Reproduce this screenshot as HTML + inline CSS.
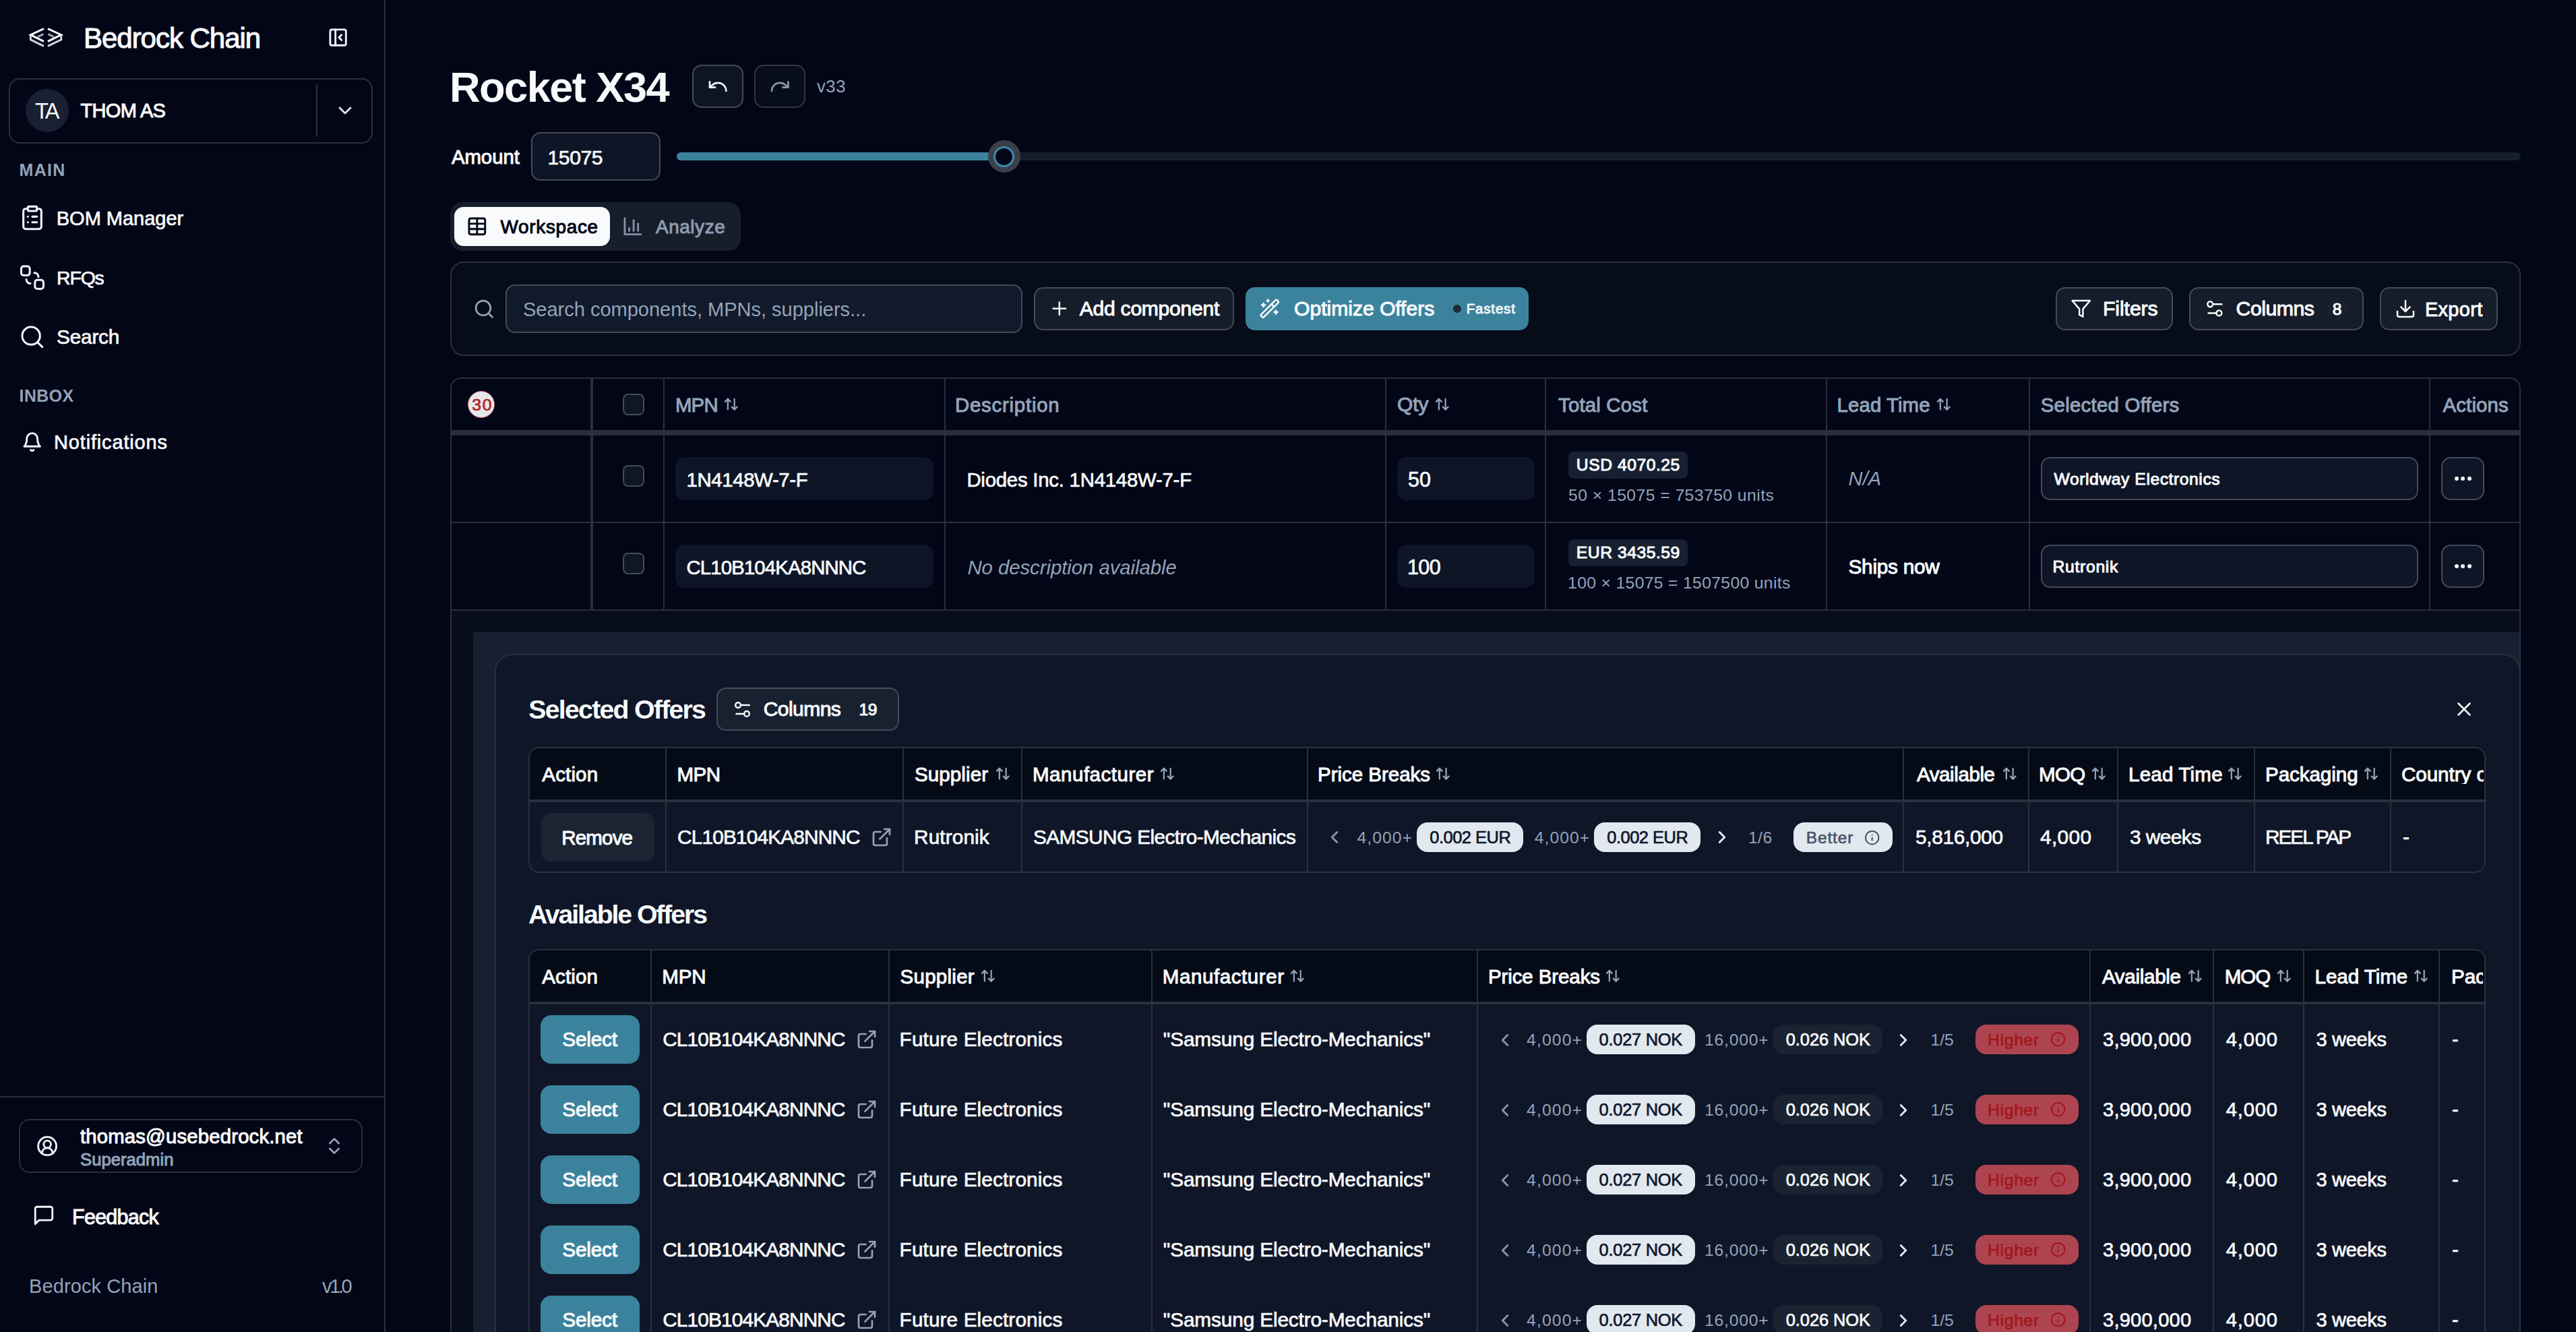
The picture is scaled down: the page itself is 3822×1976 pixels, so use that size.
<!DOCTYPE html>
<html><head><meta charset="utf-8"><style>
html,body{margin:0;padding:0;}
body{width:3822px;height:1976px;overflow:hidden;position:relative;background:#020617;font-family:"Liberation Sans",sans-serif;}
@media (max-width:2600px){body{zoom:0.5;}}
</style></head><body>
<div style="position:absolute;left:570px;top:0px;width:2px;height:1976px;background:#2a303c;border-radius:0px;"></div>
<svg style="position:absolute;left:0;top:0" width="100" height="100" viewBox="0 0 100 100" fill="none" stroke-width="3" stroke-linecap="butt" stroke-linejoin="miter">
<path d="M64.9 42.6 L45.4 51.7 L64.9 61.3" stroke="#f8fafc"/>
<path d="M71 42.6 L90.8 51.7 L71 61.3" stroke="#f8fafc"/>
<path d="M64.4 50.6 L56 54.6" stroke="#9aa3b2"/><path d="M71.5 50.6 L80 54.6" stroke="#9aa3b2"/>
<path d="M45.4 51.7 L45.4 58.8 L64.9 68.4" stroke="#cfd5de"/>
<path d="M90.8 51.7 L90.8 58.8 L71 68.4" stroke="#cfd5de"/>
</svg>
<div id="t0" style="position:absolute;left:124.00px;top:36.07px;font-size:42.15px;line-height:42.15px;font-weight:400;color:#f8fafc;white-space:nowrap;-webkit-text-stroke:1.0px #f8fafc;letter-spacing:-1.100px;">Bedrock Chain</div>
<svg style="position:absolute;left:486px;top:40.2px;" width="31.2" height="31.2" viewBox="0 0 24 24" fill="none" stroke="#f1f5f9" stroke-width="2.2" stroke-linecap="round" stroke-linejoin="round"><rect width="18" height="18" x="3" y="3" rx="2"/><path d="M9 3v18"/><path d="m16 15-3-3 3-3"/></svg>
<div style="position:absolute;left:13px;top:116px;width:540px;height:97px;background:transparent;border:2px solid #2a303c;box-sizing:border-box;border-radius:16px;"></div>
<div style="position:absolute;left:469px;top:125px;width:2px;height:78px;background:#2a303c;border-radius:0px;"></div>
<div style="position:absolute;left:38px;top:132px;width:64px;height:64px;border-radius:50%;background:#182031"></div>
<div id="t1" style="position:absolute;left:52.00px;top:148.53px;font-size:32.70px;line-height:32.70px;font-weight:400;color:#f8fafc;white-space:nowrap;letter-spacing:-2.700px;">TA</div>
<div id="t2" style="position:absolute;left:119.40px;top:150.09px;font-size:29.07px;line-height:29.07px;font-weight:400;color:#f8fafc;white-space:nowrap;-webkit-text-stroke:1.0px #f8fafc;letter-spacing:-0.700px;">THOM AS</div>
<svg style="position:absolute;left:496px;top:148px;" width="32" height="32" viewBox="0 0 24 24" fill="none" stroke="#e2e8f0" stroke-width="2" stroke-linecap="round" stroke-linejoin="round"><path d="m6 9 6 6 6-6"/></svg>
<div id="t3" style="position:absolute;left:28.60px;top:240.32px;font-size:25.00px;line-height:25.00px;font-weight:700;color:#94a3b8;white-space:nowrap;letter-spacing:1.267px;">MAIN</div>
<svg style="position:absolute;left:28px;top:303.4px;" width="40" height="40" viewBox="0 0 24 24" fill="none" stroke="#f1f5f9" stroke-width="1.85" stroke-linecap="round" stroke-linejoin="round"><rect width="8" height="4" x="8" y="2" rx="1" ry="1"/><path d="M16 4h2a2 2 0 0 1 2 2v14a2 2 0 0 1-2 2H6a2 2 0 0 1-2-2V6a2 2 0 0 1 2-2h2"/><path d="M12 11h4"/><path d="M12 16h4"/><path d="M8 11h.01"/><path d="M8 16h.01"/></svg>
<div id="t4" style="position:absolute;left:83.80px;top:310.09px;font-size:29.07px;line-height:29.07px;font-weight:400;color:#f8fafc;white-space:nowrap;-webkit-text-stroke:0.7px #f8fafc;letter-spacing:-0.060px;">BOM Manager</div>
<svg style="position:absolute;left:0;top:380px" width="80" height="60" viewBox="0 380 80 60" fill="none" stroke="#f1f5f9" stroke-width="3" stroke-linecap="round">
<rect x="31.5" y="395" width="12.7" height="13.4" rx="3.6"/>
<path d="M51 404.8 A6 6 0 0 1 57 410.8"/>
<path d="M39 414.6 A6 6 0 0 0 45 420.6"/>
<rect x="51.8" y="415.3" width="12.7" height="13.3" rx="3.6"/>
</svg>
<div id="t5" style="position:absolute;left:84.10px;top:398.38px;font-size:28.49px;line-height:28.49px;font-weight:400;color:#f8fafc;white-space:nowrap;-webkit-text-stroke:0.7px #f8fafc;letter-spacing:-1.200px;">RFQs</div>
<svg style="position:absolute;left:28.3px;top:479.8px;" width="39.6" height="39.6" viewBox="0 0 24 24" fill="none" stroke="#f1f5f9" stroke-width="1.85" stroke-linecap="round" stroke-linejoin="round"><circle cx="11" cy="11" r="8"/><path d="m21 21-4.3-4.3"/></svg>
<div id="t6" style="position:absolute;left:84.10px;top:485.48px;font-size:29.80px;line-height:29.80px;font-weight:400;color:#f8fafc;white-space:nowrap;-webkit-text-stroke:0.7px #f8fafc;letter-spacing:-0.240px;">Search</div>
<div id="t7" style="position:absolute;left:28.60px;top:576.35px;font-size:24.85px;line-height:24.85px;font-weight:700;color:#94a3b8;white-space:nowrap;letter-spacing:0.450px;">INBOX</div>
<svg style="position:absolute;left:32.4px;top:639.9px;" width="31.4" height="31.4" viewBox="0 0 24 24" fill="none" stroke="#f1f5f9" stroke-width="2.2" stroke-linecap="round" stroke-linejoin="round"><path d="M6 8a6 6 0 0 1 12 0c0 7 3 9 3 9H3s3-2 3-9"/><path d="M10.3 21a1.94 1.94 0 0 0 3.4 0"/></svg>
<div id="t8" style="position:absolute;left:80.00px;top:642.09px;font-size:29.07px;line-height:29.07px;font-weight:400;color:#f8fafc;white-space:nowrap;-webkit-text-stroke:0.7px #f8fafc;letter-spacing:0.817px;">Notifications</div>
<div style="position:absolute;left:0px;top:1626px;width:570px;height:2px;background:#2a303c;border-radius:0px;"></div>
<div style="position:absolute;left:28px;top:1660px;width:510px;height:80px;background:transparent;border:2px solid #2a303c;box-sizing:border-box;border-radius:16px;"></div>
<svg style="position:absolute;left:53.7px;top:1683.7px;" width="32.3" height="32.3" viewBox="0 0 24 24" fill="none" stroke="#f1f5f9" stroke-width="2.1" stroke-linecap="round" stroke-linejoin="round"><path d="M18 20a6 6 0 0 0-12 0"/><circle cx="12" cy="10" r="4"/><circle cx="12" cy="12" r="10"/></svg>
<div id="t9" style="position:absolute;left:119.00px;top:1670.55px;font-size:29.36px;line-height:29.36px;font-weight:400;color:#f8fafc;white-space:nowrap;-webkit-text-stroke:1.0px #f8fafc;letter-spacing:0.140px;">thomas@usebedrock.net</div>
<div id="t10" style="position:absolute;left:119.00px;top:1708.11px;font-size:25.73px;line-height:25.73px;font-weight:400;color:#94a3b8;white-space:nowrap;-webkit-text-stroke:1.0px #94a3b8;letter-spacing:-0.022px;">Superadmin</div>
<svg style="position:absolute;left:480px;top:1684px;" width="32" height="32" viewBox="0 0 24 24" fill="none" stroke="#94a3b8" stroke-width="2" stroke-linecap="round" stroke-linejoin="round"><path d="m7 15 5 5 5-5"/><path d="m7 9 5-5 5 5"/></svg>
<svg style="position:absolute;left:48px;top:1786px;" width="34" height="34" viewBox="0 0 24 24" fill="none" stroke="#f1f5f9" stroke-width="2" stroke-linecap="round" stroke-linejoin="round"><path d="M21 15a2 2 0 0 1-2 2H7l-4 4V5a2 2 0 0 1 2-2h14a2 2 0 0 1 2 2z"/></svg>
<div id="t11" style="position:absolute;left:107.00px;top:1789.87px;font-size:30.52px;line-height:30.52px;font-weight:400;color:#f8fafc;white-space:nowrap;-webkit-text-stroke:1.0px #f8fafc;letter-spacing:-0.743px;">Feedback</div>
<div id="t12" style="position:absolute;left:43.00px;top:1894.09px;font-size:29.07px;line-height:29.07px;font-weight:400;color:#94a3b8;white-space:nowrap;letter-spacing:0.067px;">Bedrock Chain</div>
<div id="t13" style="position:absolute;left:478.00px;top:1894.09px;font-size:29.07px;line-height:29.07px;font-weight:400;color:#94a3b8;white-space:nowrap;letter-spacing:-3.400px;">v1.0</div>
<div id="t14" style="position:absolute;left:667.00px;top:97.50px;font-size:63.23px;line-height:63.23px;font-weight:700;color:#f8fafc;white-space:nowrap;letter-spacing:-1.578px;">Rocket X34</div>
<div style="position:absolute;left:1027px;top:96px;width:76px;height:64px;background:#0d1424;border:2px solid #454a55;box-sizing:border-box;border-radius:14px;"></div>
<svg style="position:absolute;left:1048.7px;top:111.7px" width="32.4" height="32.4" viewBox="0 0 24 24" fill="none" stroke="#f1f5f9" stroke-width="2" stroke-linecap="round" stroke-linejoin="round"><path d="M3 7v6h6"/><path d="M21 17a9 9 0 0 0-9-9 9 9 0 0 0-6 2.3L3 13"/></svg>
<div style="position:absolute;left:1119px;top:96px;width:76px;height:64px;background:#080d1a;border:2px solid #30353f;box-sizing:border-box;border-radius:14px;"></div>
<svg style="position:absolute;left:1141px;top:111.7px" width="32.4" height="32.4" viewBox="0 0 24 24" fill="none" stroke="#8f96a3" stroke-width="2" stroke-linecap="round" stroke-linejoin="round"><path d="M21 7v6h-6"/><path d="M3 17a9 9 0 0 1 9-9 9 9 0 0 1 6 2.3l3 2.7"/></svg>
<div id="t15" style="position:absolute;left:1211.90px;top:115.91px;font-size:25.73px;line-height:25.73px;font-weight:400;color:#94a3b8;white-space:nowrap;letter-spacing:0.550px;">v33</div>
<div id="t16" style="position:absolute;left:669.90px;top:217.85px;font-size:29.36px;line-height:29.36px;font-weight:400;color:#f8fafc;white-space:nowrap;-webkit-text-stroke:1.0px #f8fafc;letter-spacing:-0.040px;">Amount</div>
<div style="position:absolute;left:788px;top:196px;width:192px;height:72px;background:#0e1526;border:2px solid #454a55;box-sizing:border-box;border-radius:14px;"></div>
<div id="t17" style="position:absolute;left:812.60px;top:218.54px;font-size:30.09px;line-height:30.09px;font-weight:400;color:#f8fafc;white-space:nowrap;-webkit-text-stroke:0.7px #f8fafc;letter-spacing:-0.450px;">15075</div>
<div style="position:absolute;left:1004px;top:226px;width:2736px;height:12px;background:#161e2d;border-radius:6px;"></div>
<div style="position:absolute;left:1004px;top:226px;width:480px;height:12px;background:#3b839d;border-radius:6px;"></div>
<div style="position:absolute;left:1465.5px;top:208px;width:48px;height:48px;border-radius:50%;background:#3b3f49"></div>
<div style="position:absolute;left:1474px;top:216.5px;width:31px;height:31px;border-radius:50%;background:#020617;border:3.5px solid #3e8aa8;box-sizing:border-box"></div>
<div style="position:absolute;left:668px;top:300px;width:431px;height:72px;background:#161e2c;border-radius:18px;"></div>
<div style="position:absolute;left:674px;top:307px;width:231px;height:58px;background:#f8fafc;border-radius:14px;"></div>
<svg style="position:absolute;left:692px;top:320px;" width="31.7" height="31.7" viewBox="0 0 24 24" fill="none" stroke="#020617" stroke-width="2.2" stroke-linecap="round" stroke-linejoin="round"><path d="M12 3v18"/><rect width="18" height="18" x="3" y="3" rx="2"/><path d="M3 9h18"/><path d="M3 15h18"/></svg>
<div id="t18" style="position:absolute;left:742.60px;top:323.27px;font-size:27.91px;line-height:27.91px;font-weight:400;color:#020617;white-space:nowrap;-webkit-text-stroke:1.0px #020617;letter-spacing:0.675px;">Workspace</div>
<svg style="position:absolute;left:922.9px;top:320.4px;" width="31.6" height="31.6" viewBox="0 0 24 24" fill="none" stroke="#8390a5" stroke-width="2.2" stroke-linecap="round" stroke-linejoin="round"><path d="M3 3v18h18"/><path d="M18 17V9"/><path d="M13 17V5"/><path d="M8 17v-3"/></svg>
<div id="t19" style="position:absolute;left:973.00px;top:323.27px;font-size:27.91px;line-height:27.91px;font-weight:400;color:#8d9bb0;white-space:nowrap;-webkit-text-stroke:1.0px #8d9bb0;letter-spacing:0.567px;">Analyze</div>
<div style="position:absolute;left:668px;top:388px;width:3072px;height:140px;background:#060c19;border:2px solid #2a303c;box-sizing:border-box;border-radius:20px;"></div>
<svg style="position:absolute;left:701.6px;top:441.6px;" width="32.6" height="32.6" viewBox="0 0 24 24" fill="none" stroke="#94a3b8" stroke-width="2" stroke-linecap="round" stroke-linejoin="round"><circle cx="11" cy="11" r="8"/><path d="m21 21-4.3-4.3"/></svg>
<div style="position:absolute;left:750px;top:422px;width:767px;height:72px;background:#111a2a;border:2px solid #454a55;box-sizing:border-box;border-radius:14px;"></div>
<div id="t20" style="position:absolute;left:776.00px;top:444.79px;font-size:29.07px;line-height:29.07px;font-weight:400;color:#94a3b8;white-space:nowrap;letter-spacing:-0.033px;">Search components, MPNs, suppliers...</div>
<div style="position:absolute;left:1534px;top:426px;width:297px;height:64px;background:#151c2a;border:2px solid #454a55;box-sizing:border-box;border-radius:14px;"></div>
<svg style="position:absolute;left:1556.3px;top:442px;" width="31.7" height="31.7" viewBox="0 0 24 24" fill="none" stroke="#f8fafc" stroke-width="1.9" stroke-linecap="round" stroke-linejoin="round"><path d="M5 12h14"/><path d="M12 5v14"/></svg>
<div id="t21" style="position:absolute;left:1601.80px;top:443.24px;font-size:30.09px;line-height:30.09px;font-weight:400;color:#f8fafc;white-space:nowrap;-webkit-text-stroke:1.0px #f8fafc;letter-spacing:-0.267px;">Add component</div>
<div style="position:absolute;left:1848px;top:426px;width:420px;height:64px;background:#3b839d;border-radius:14px;"></div>
<svg style="position:absolute;left:1868px;top:442px;" width="31.6" height="31.6" viewBox="0 0 24 24" fill="none" stroke="#f8fafc" stroke-width="1.9" stroke-linecap="round" stroke-linejoin="round"><path d="m21.64 3.64-1.28-1.28a1.21 1.21 0 0 0-1.72 0L2.36 18.64a1.21 1.21 0 0 0 0 1.72l1.28 1.28a1.2 1.2 0 0 0 1.72 0L21.64 5.36a1.2 1.2 0 0 0 0-1.72"/><path d="m14 7 3 3"/><path d="M5 6v4"/><path d="M19 14v4"/><path d="M10 2v2"/><path d="M7 8H3"/><path d="M21 16h-4"/><path d="M11 3H9"/></svg>
<div id="t22" style="position:absolute;left:1920.10px;top:443.11px;font-size:30.23px;line-height:30.23px;font-weight:400;color:#f8fafc;white-space:nowrap;-webkit-text-stroke:1.0px #f8fafc;letter-spacing:-0.086px;">Optimize Offers</div>
<div style="position:absolute;left:2156px;top:452px;width:12px;height:12px;border-radius:50%;background:#1f2733"></div>
<div id="t23" style="position:absolute;left:2175.80px;top:448.45px;font-size:20.35px;line-height:20.35px;font-weight:400;color:#eef2f6;white-space:nowrap;-webkit-text-stroke:1.0px #eef2f6;letter-spacing:0.883px;">Fastest</div>
<div style="position:absolute;left:3050px;top:426px;width:174px;height:64px;background:#151c2a;border:2px solid #454a55;box-sizing:border-box;border-radius:14px;"></div>
<svg style="position:absolute;left:3072.2px;top:441.9px;" width="31.6" height="31.6" viewBox="0 0 24 24" fill="none" stroke="#f8fafc" stroke-width="1.9" stroke-linecap="round" stroke-linejoin="round"><polygon points="22 3 2 3 10 12.46 10 19 14 21 14 12.46 22 3"/></svg>
<div id="t24" style="position:absolute;left:3120.00px;top:443.21px;font-size:30.23px;line-height:30.23px;font-weight:400;color:#f8fafc;white-space:nowrap;-webkit-text-stroke:1.0px #f8fafc;letter-spacing:-0.100px;">Filters</div>
<div style="position:absolute;left:3248px;top:426px;width:259px;height:64px;background:#151c2a;border:2px solid #454a55;box-sizing:border-box;border-radius:14px;"></div>
<svg style="position:absolute;left:3270.4px;top:442.4px;" width="31.6" height="31.6" viewBox="0 0 24 24" fill="none" stroke="#f8fafc" stroke-width="1.9" stroke-linecap="round" stroke-linejoin="round"><path d="M20 7h-9"/><path d="M14 17H5"/><circle cx="17" cy="17" r="3"/><circle cx="7" cy="7" r="3"/></svg>
<div id="t25" style="position:absolute;left:3317.60px;top:443.21px;font-size:30.23px;line-height:30.23px;font-weight:400;color:#f8fafc;white-space:nowrap;-webkit-text-stroke:1.0px #f8fafc;letter-spacing:-0.500px;">Columns</div>
<div style="position:absolute;left:3450.8px;top:440.5px;width:34px;height:34px;border-radius:50%;background:#182030"></div>
<div id="t26" style="position:absolute;left:3460.70px;top:446.82px;font-size:24.42px;line-height:24.42px;font-weight:400;color:#f8fafc;white-space:nowrap;-webkit-text-stroke:1.0px #f8fafc;">8</div>
<div style="position:absolute;left:3531px;top:426px;width:175px;height:64px;background:#151c2a;border:2px solid #454a55;box-sizing:border-box;border-radius:14px;"></div>
<svg style="position:absolute;left:3552.8px;top:442px;" width="32" height="32" viewBox="0 0 24 24" fill="none" stroke="#f8fafc" stroke-width="1.9" stroke-linecap="round" stroke-linejoin="round"><path d="M21 15v4a2 2 0 0 1-2 2H5a2 2 0 0 1-2-2v-4"/><polyline points="7 10 12 15 17 10"/><line x1="12" x2="12" y1="15" y2="3"/></svg>
<div id="t27" style="position:absolute;left:3597.90px;top:444.64px;font-size:28.78px;line-height:28.78px;font-weight:400;color:#f8fafc;white-space:nowrap;-webkit-text-stroke:1.0px #f8fafc;letter-spacing:0.420px;">Export</div>
<div style="position:absolute;left:670px;top:905px;width:3068px;height:1071px;background:#070d1a;border-radius:0px;"></div>
<div style="position:absolute;left:702px;top:938px;width:3036px;height:1038px;background:#162030;border-radius:0px;"></div>
<div style="position:absolute;left:668px;top:560px;width:3072px;height:1500px;border:2px solid #2a303c;border-radius:16px;box-sizing:border-box"></div>
<div style="position:absolute;left:670px;top:638px;width:3068px;height:8px;background:#2a2f3b;border-radius:0px;"></div>
<div style="position:absolute;left:670px;top:774px;width:3068px;height:2px;background:#2a303c;border-radius:0px;"></div>
<div style="position:absolute;left:670px;top:904px;width:3068px;height:2px;background:#2a303c;border-radius:0px;"></div>
<div style="position:absolute;left:876px;top:562px;width:4px;height:343px;background:#2a303c;border-radius:0px;"></div>
<div style="position:absolute;left:984px;top:562px;width:2px;height:343px;background:#2a303c;border-radius:0px;"></div>
<div style="position:absolute;left:1401px;top:562px;width:2px;height:343px;background:#2a303c;border-radius:0px;"></div>
<div style="position:absolute;left:2055px;top:562px;width:2px;height:343px;background:#2a303c;border-radius:0px;"></div>
<div style="position:absolute;left:2292px;top:562px;width:2px;height:343px;background:#2a303c;border-radius:0px;"></div>
<div style="position:absolute;left:2709px;top:562px;width:2px;height:343px;background:#2a303c;border-radius:0px;"></div>
<div style="position:absolute;left:3010px;top:562px;width:2px;height:343px;background:#2a303c;border-radius:0px;"></div>
<div style="position:absolute;left:3604px;top:562px;width:2px;height:343px;background:#2a303c;border-radius:0px;"></div>
<div style="position:absolute;left:694px;top:580px;width:40px;height:40px;border-radius:50%;background:#e5e9ee;border:1.5px solid #d36b6b;box-sizing:border-box"></div>
<div id="t28" style="position:absolute;left:700.20px;top:588.77px;font-size:24.71px;line-height:24.71px;font-weight:400;color:#b91c1c;white-space:nowrap;-webkit-text-stroke:0.7px #b91c1c;letter-spacing:1.900px;">30</div>
<div style="position:absolute;left:924px;top:584px;width:32px;height:32px;background:#0f1626;border:2px solid #454a55;box-sizing:border-box;border-radius:8px;"></div>
<div id="t29" style="position:absolute;left:1001.90px;top:586.05px;font-size:29.36px;line-height:29.36px;font-weight:400;color:#94a3b8;white-space:nowrap;-webkit-text-stroke:1.0px #94a3b8;letter-spacing:-0.750px;">MPN</div>
<svg style="position:absolute;left:1073.4px;top:588px;" width="23.5" height="23.5" viewBox="0 0 24 24" fill="none" stroke="#94a3b8" stroke-width="2.3" stroke-linecap="round" stroke-linejoin="round"><path d="m21 16-4 4-4-4"/><path d="M17 20V4"/><path d="m3 8 4-4 4 4"/><path d="M7 4v16"/></svg>
<div id="t30" style="position:absolute;left:1417.00px;top:586.05px;font-size:29.36px;line-height:29.36px;font-weight:400;color:#94a3b8;white-space:nowrap;-webkit-text-stroke:1.0px #94a3b8;letter-spacing:0.780px;">Description</div>
<div id="t31" style="position:absolute;left:2072.90px;top:585.36px;font-size:29.94px;line-height:29.94px;font-weight:400;color:#94a3b8;white-space:nowrap;-webkit-text-stroke:1.0px #94a3b8;letter-spacing:0.050px;">Qty</div>
<svg style="position:absolute;left:2128px;top:588px;" width="23.5" height="23.5" viewBox="0 0 24 24" fill="none" stroke="#94a3b8" stroke-width="2.3" stroke-linecap="round" stroke-linejoin="round"><path d="m21 16-4 4-4-4"/><path d="M17 20V4"/><path d="m3 8 4-4 4 4"/><path d="M7 4v16"/></svg>
<div id="t32" style="position:absolute;left:2312.00px;top:586.05px;font-size:29.36px;line-height:29.36px;font-weight:400;color:#94a3b8;white-space:nowrap;-webkit-text-stroke:1.0px #94a3b8;letter-spacing:0.200px;">Total Cost</div>
<div id="t33" style="position:absolute;left:2725.60px;top:586.05px;font-size:29.36px;line-height:29.36px;font-weight:400;color:#94a3b8;white-space:nowrap;-webkit-text-stroke:1.0px #94a3b8;letter-spacing:0.100px;">Lead Time</div>
<svg style="position:absolute;left:2872px;top:588px;" width="23.5" height="23.5" viewBox="0 0 24 24" fill="none" stroke="#94a3b8" stroke-width="2.3" stroke-linecap="round" stroke-linejoin="round"><path d="m21 16-4 4-4-4"/><path d="M17 20V4"/><path d="m3 8 4-4 4 4"/><path d="M7 4v16"/></svg>
<div id="t34" style="position:absolute;left:3027.70px;top:586.05px;font-size:29.36px;line-height:29.36px;font-weight:400;color:#94a3b8;white-space:nowrap;-webkit-text-stroke:1.0px #94a3b8;letter-spacing:0.271px;">Selected Offers</div>
<div id="t35" style="position:absolute;left:3624.60px;top:586.05px;font-size:29.36px;line-height:29.36px;font-weight:400;color:#94a3b8;white-space:nowrap;-webkit-text-stroke:1.0px #94a3b8;letter-spacing:0.133px;">Actions</div>
<div style="position:absolute;left:924px;top:690px;width:32px;height:32px;background:#0f1626;border:2px solid #454a55;box-sizing:border-box;border-radius:8px;"></div>
<div style="position:absolute;left:1002px;top:678px;width:383px;height:64px;background:#0e1527;border-radius:14px;"></div>
<div id="t36" style="position:absolute;left:1018.50px;top:697.25px;font-size:29.36px;line-height:29.36px;font-weight:400;color:#f8fafc;white-space:nowrap;-webkit-text-stroke:0.7px #f8fafc;letter-spacing:-0.370px;">1N4148W-7-F</div>
<div id="t37" style="position:absolute;left:1434.40px;top:697.25px;font-size:29.36px;line-height:29.36px;font-weight:400;color:#f8fafc;white-space:nowrap;-webkit-text-stroke:0.7px #f8fafc;letter-spacing:-0.236px;">Diodes Inc. 1N4148W-7-F</div>
<div style="position:absolute;left:2073px;top:678px;width:204px;height:64px;background:#0e1527;border-radius:14px;"></div>
<div id="t38" style="position:absolute;left:2089.00px;top:696.27px;font-size:30.52px;line-height:30.52px;font-weight:400;color:#f8fafc;white-space:nowrap;-webkit-text-stroke:0.7px #f8fafc;letter-spacing:0.100px;">50</div>
<div style="position:absolute;left:2327px;top:670px;width:177px;height:40px;background:#172030;border-radius:8px;"></div>
<div id="t39" style="position:absolute;left:2338.80px;top:678.47px;font-size:24.71px;line-height:24.71px;font-weight:400;color:#f8fafc;white-space:nowrap;-webkit-text-stroke:1.0px #f8fafc;letter-spacing:0.520px;">USD 4070.25</div>
<div id="t40" style="position:absolute;left:2327.10px;top:722.57px;font-size:24.71px;line-height:24.71px;font-weight:400;color:#94a3b8;white-space:nowrap;letter-spacing:0.450px;">50 &times; 15075 = 753750 units</div>
<div id="t41" style="position:absolute;left:2742.50px;top:695.89px;font-size:29.07px;line-height:29.07px;font-weight:400;color:#94a3b8;white-space:nowrap;font-style:italic;letter-spacing:0.150px;">N/A</div>
<div style="position:absolute;left:3028px;top:678px;width:560px;height:64px;background:#0e1527;border:2px solid #454a55;box-sizing:border-box;border-radius:14px;"></div>
<div id="t42" style="position:absolute;left:3047.60px;top:698.77px;font-size:24.71px;line-height:24.71px;font-weight:400;color:#f8fafc;white-space:nowrap;-webkit-text-stroke:1.0px #f8fafc;letter-spacing:0.547px;">Worldway Electronics</div>
<div style="position:absolute;left:3622px;top:678px;width:64px;height:64px;background:#0e1527;border:2px solid #454a55;box-sizing:border-box;border-radius:14px;"></div>
<div style="position:absolute;left:3641.6px;top:707px;width:6px;height:6px;border-radius:50%;background:#f8fafc"></div>
<div style="position:absolute;left:3651px;top:707px;width:6px;height:6px;border-radius:50%;background:#f8fafc"></div>
<div style="position:absolute;left:3660.5px;top:707px;width:6px;height:6px;border-radius:50%;background:#f8fafc"></div>
<div style="position:absolute;left:924px;top:820px;width:32px;height:32px;background:#0f1626;border:2px solid #454a55;box-sizing:border-box;border-radius:8px;"></div>
<div style="position:absolute;left:1002px;top:808px;width:383px;height:64px;background:#0e1527;border-radius:14px;"></div>
<div id="t43" style="position:absolute;left:1018.50px;top:827.25px;font-size:29.36px;line-height:29.36px;font-weight:400;color:#f8fafc;white-space:nowrap;-webkit-text-stroke:0.7px #f8fafc;letter-spacing:-0.871px;">CL10B104KA8NNNC</div>
<div id="t44" style="position:absolute;left:1435.40px;top:827.25px;font-size:29.36px;line-height:29.36px;font-weight:400;color:#94a3b8;white-space:nowrap;font-style:italic;letter-spacing:-0.052px;">No description available</div>
<div style="position:absolute;left:2073px;top:808px;width:204px;height:64px;background:#0e1527;border-radius:14px;"></div>
<div id="t45" style="position:absolute;left:2088.00px;top:826.27px;font-size:30.52px;line-height:30.52px;font-weight:400;color:#f8fafc;white-space:nowrap;-webkit-text-stroke:0.7px #f8fafc;letter-spacing:-0.600px;">100</div>
<div style="position:absolute;left:2327px;top:800px;width:177px;height:40px;background:#172030;border-radius:8px;"></div>
<div id="t46" style="position:absolute;left:2338.80px;top:808.47px;font-size:24.71px;line-height:24.71px;font-weight:400;color:#f8fafc;white-space:nowrap;-webkit-text-stroke:1.0px #f8fafc;letter-spacing:0.520px;">EUR 3435.59</div>
<div id="t47" style="position:absolute;left:2326.10px;top:852.57px;font-size:24.71px;line-height:24.71px;font-weight:400;color:#94a3b8;white-space:nowrap;letter-spacing:0.338px;">100 &times; 15075 = 1507500 units</div>
<div id="t48" style="position:absolute;left:2742.50px;top:825.78px;font-size:29.80px;line-height:29.80px;font-weight:400;color:#f8fafc;white-space:nowrap;-webkit-text-stroke:1.0px #f8fafc;letter-spacing:-0.275px;">Ships now</div>
<div style="position:absolute;left:3028px;top:808px;width:560px;height:64px;background:#0e1527;border:2px solid #454a55;box-sizing:border-box;border-radius:14px;"></div>
<div id="t49" style="position:absolute;left:3045.60px;top:828.77px;font-size:24.71px;line-height:24.71px;font-weight:400;color:#f8fafc;white-space:nowrap;-webkit-text-stroke:1.0px #f8fafc;letter-spacing:0.686px;">Rutronik</div>
<div style="position:absolute;left:3622px;top:808px;width:64px;height:64px;background:#0e1527;border:2px solid #454a55;box-sizing:border-box;border-radius:14px;"></div>
<div style="position:absolute;left:3641.6px;top:837px;width:6px;height:6px;border-radius:50%;background:#f8fafc"></div>
<div style="position:absolute;left:3651px;top:837px;width:6px;height:6px;border-radius:50%;background:#f8fafc"></div>
<div style="position:absolute;left:3660.5px;top:837px;width:6px;height:6px;border-radius:50%;background:#f8fafc"></div>
<div style="position:absolute;left:734px;top:970px;width:3006px;height:1100px;background:#0f1628;border:2px solid #2a303c;border-radius:26px;box-sizing:border-box"></div>
<div id="t50" style="position:absolute;left:784.30px;top:1032.62px;font-size:39.24px;line-height:39.24px;font-weight:700;color:#f8fafc;white-space:nowrap;letter-spacing:-1.729px;">Selected Offers</div>
<div style="position:absolute;left:1063px;top:1020px;width:271px;height:64px;background:#182130;border:2px solid #454a55;box-sizing:border-box;border-radius:14px;"></div>
<svg style="position:absolute;left:1085.8px;top:1037.1px;" width="31" height="31" viewBox="0 0 24 24" fill="none" stroke="#f8fafc" stroke-width="1.9" stroke-linecap="round" stroke-linejoin="round"><path d="M20 7h-9"/><path d="M14 17H5"/><circle cx="17" cy="17" r="3"/><circle cx="7" cy="7" r="3"/></svg>
<div id="t51" style="position:absolute;left:1132.70px;top:1037.44px;font-size:30.09px;line-height:30.09px;font-weight:400;color:#f8fafc;white-space:nowrap;-webkit-text-stroke:1.0px #f8fafc;letter-spacing:-0.583px;">Columns</div>
<div id="t52" style="position:absolute;left:1274.50px;top:1040.57px;font-size:24.71px;line-height:24.71px;font-weight:400;color:#f8fafc;white-space:nowrap;-webkit-text-stroke:1.0px #f8fafc;letter-spacing:-0.400px;">19</div>
<svg style="position:absolute;left:3638.9px;top:1034.9px;" width="34" height="34" viewBox="0 0 24 24" fill="none" stroke="#f8fafc" stroke-width="1.8" stroke-linecap="round" stroke-linejoin="round"><path d="M18 6 6 18"/><path d="m6 6 12 12"/></svg>
<div style="position:absolute;left:784px;top:1108px;width:2904px;height:187px;border:2px solid #2a303c;border-radius:16px;box-sizing:border-box;overflow:hidden"><div style="position:absolute;left:0;top:0;width:100%;height:76px;background:#050a17"></div></div>
<div style="position:absolute;left:786px;top:1186px;width:2900px;height:4px;background:#2a303c;border-radius:0px;"></div>
<div style="position:absolute;left:987px;top:1110px;width:2px;height:183px;background:#2a303c;border-radius:0px;"></div>
<div style="position:absolute;left:1339px;top:1110px;width:2px;height:183px;background:#2a303c;border-radius:0px;"></div>
<div style="position:absolute;left:1515px;top:1110px;width:2px;height:183px;background:#2a303c;border-radius:0px;"></div>
<div style="position:absolute;left:1939px;top:1110px;width:2px;height:183px;background:#2a303c;border-radius:0px;"></div>
<div style="position:absolute;left:2823px;top:1110px;width:2px;height:183px;background:#2a303c;border-radius:0px;"></div>
<div style="position:absolute;left:3009px;top:1110px;width:2px;height:183px;background:#2a303c;border-radius:0px;"></div>
<div style="position:absolute;left:3141px;top:1110px;width:2px;height:183px;background:#2a303c;border-radius:0px;"></div>
<div style="position:absolute;left:3344px;top:1110px;width:2px;height:183px;background:#2a303c;border-radius:0px;"></div>
<div style="position:absolute;left:3546px;top:1110px;width:2px;height:183px;background:#2a303c;border-radius:0px;"></div>
<div id="t53" style="position:absolute;left:804.30px;top:1133.83px;font-size:29.51px;line-height:29.51px;font-weight:400;color:#f8fafc;white-space:nowrap;-webkit-text-stroke:1.0px #f8fafc;letter-spacing:0.160px;">Action</div>
<div id="t54" style="position:absolute;left:1004.40px;top:1133.83px;font-size:29.51px;line-height:29.51px;font-weight:400;color:#f8fafc;white-space:nowrap;-webkit-text-stroke:1.0px #f8fafc;letter-spacing:-0.400px;">MPN</div>
<div id="t55" style="position:absolute;left:1357.00px;top:1133.83px;font-size:29.51px;line-height:29.51px;font-weight:400;color:#f8fafc;white-space:nowrap;-webkit-text-stroke:1.0px #f8fafc;letter-spacing:0.114px;">Supplier</div>
<svg style="position:absolute;left:1475.5px;top:1136px;" width="23.5" height="23.5" viewBox="0 0 24 24" fill="none" stroke="#94a3b8" stroke-width="2.3" stroke-linecap="round" stroke-linejoin="round"><path d="m21 16-4 4-4-4"/><path d="M17 20V4"/><path d="m3 8 4-4 4 4"/><path d="M7 4v16"/></svg>
<div id="t56" style="position:absolute;left:1532.00px;top:1133.83px;font-size:29.51px;line-height:29.51px;font-weight:400;color:#f8fafc;white-space:nowrap;-webkit-text-stroke:1.0px #f8fafc;letter-spacing:0.527px;">Manufacturer</div>
<svg style="position:absolute;left:1719.5px;top:1136px;" width="23.5" height="23.5" viewBox="0 0 24 24" fill="none" stroke="#94a3b8" stroke-width="2.3" stroke-linecap="round" stroke-linejoin="round"><path d="m21 16-4 4-4-4"/><path d="M17 20V4"/><path d="m3 8 4-4 4 4"/><path d="M7 4v16"/></svg>
<div id="t57" style="position:absolute;left:1955.00px;top:1133.83px;font-size:29.51px;line-height:29.51px;font-weight:400;color:#f8fafc;white-space:nowrap;-webkit-text-stroke:1.0px #f8fafc;letter-spacing:-0.018px;">Price Breaks</div>
<svg style="position:absolute;left:2128.5px;top:1136px;" width="23.5" height="23.5" viewBox="0 0 24 24" fill="none" stroke="#94a3b8" stroke-width="2.3" stroke-linecap="round" stroke-linejoin="round"><path d="m21 16-4 4-4-4"/><path d="M17 20V4"/><path d="m3 8 4-4 4 4"/><path d="M7 4v16"/></svg>
<div id="t58" style="position:absolute;left:2844.00px;top:1133.83px;font-size:29.51px;line-height:29.51px;font-weight:400;color:#f8fafc;white-space:nowrap;-webkit-text-stroke:1.0px #f8fafc;letter-spacing:-0.400px;">Available</div>
<svg style="position:absolute;left:2969.5px;top:1136px;" width="23.5" height="23.5" viewBox="0 0 24 24" fill="none" stroke="#94a3b8" stroke-width="2.3" stroke-linecap="round" stroke-linejoin="round"><path d="m21 16-4 4-4-4"/><path d="M17 20V4"/><path d="m3 8 4-4 4 4"/><path d="M7 4v16"/></svg>
<div id="t59" style="position:absolute;left:3025.00px;top:1133.83px;font-size:29.51px;line-height:29.51px;font-weight:400;color:#f8fafc;white-space:nowrap;-webkit-text-stroke:1.0px #f8fafc;letter-spacing:-0.600px;">MOQ</div>
<svg style="position:absolute;left:3101.5px;top:1136px;" width="23.5" height="23.5" viewBox="0 0 24 24" fill="none" stroke="#94a3b8" stroke-width="2.3" stroke-linecap="round" stroke-linejoin="round"><path d="m21 16-4 4-4-4"/><path d="M17 20V4"/><path d="m3 8 4-4 4 4"/><path d="M7 4v16"/></svg>
<div id="t60" style="position:absolute;left:3158.00px;top:1133.83px;font-size:29.51px;line-height:29.51px;font-weight:400;color:#f8fafc;white-space:nowrap;-webkit-text-stroke:1.0px #f8fafc;letter-spacing:0.225px;">Lead Time</div>
<svg style="position:absolute;left:3303.5px;top:1136px;" width="23.5" height="23.5" viewBox="0 0 24 24" fill="none" stroke="#94a3b8" stroke-width="2.3" stroke-linecap="round" stroke-linejoin="round"><path d="m21 16-4 4-4-4"/><path d="M17 20V4"/><path d="m3 8 4-4 4 4"/><path d="M7 4v16"/></svg>
<div id="t61" style="position:absolute;left:3361.00px;top:1133.83px;font-size:29.51px;line-height:29.51px;font-weight:400;color:#f8fafc;white-space:nowrap;-webkit-text-stroke:1.0px #f8fafc;letter-spacing:-0.025px;">Packaging</div>
<svg style="position:absolute;left:3505.5px;top:1136px;" width="23.5" height="23.5" viewBox="0 0 24 24" fill="none" stroke="#94a3b8" stroke-width="2.3" stroke-linecap="round" stroke-linejoin="round"><path d="m21 16-4 4-4-4"/><path d="M17 20V4"/><path d="m3 8 4-4 4 4"/><path d="M7 4v16"/></svg>
<div id="t62" style="position:absolute;left:3563.00px;top:1133.83px;font-size:29.51px;line-height:29.51px;font-weight:400;color:#f8fafc;white-space:nowrap;-webkit-text-stroke:1.0px #f8fafc;width:122px;overflow:hidden;">Country of Origin</div>
<div style="position:absolute;left:802.6px;top:1205.8px;width:168px;height:72.5px;background:#1b2432;border-radius:14px;"></div>
<div id="t63" style="position:absolute;left:833.30px;top:1227.53px;font-size:29.51px;line-height:29.51px;font-weight:400;color:#f8fafc;white-space:nowrap;-webkit-text-stroke:1.0px #f8fafc;letter-spacing:-0.840px;">Remove</div>
<div id="t64" style="position:absolute;left:1005.00px;top:1227.48px;font-size:29.80px;line-height:29.80px;font-weight:400;color:#f8fafc;white-space:nowrap;-webkit-text-stroke:0.7px #f8fafc;letter-spacing:-0.836px;">CL10B104KA8NNNC</div>
<svg style="position:absolute;left:1292.3px;top:1225.7px;" width="32" height="32" viewBox="0 0 24 24" fill="none" stroke="#94a3b8" stroke-width="2" stroke-linecap="round" stroke-linejoin="round"><path d="M15 3h6v6"/><path d="M10 14 21 3"/><path d="M18 13v6a2 2 0 0 1-2 2H5a2 2 0 0 1-2-2V8a2 2 0 0 1 2-2h6"/></svg>
<div id="t65" style="position:absolute;left:1356.00px;top:1227.48px;font-size:29.80px;line-height:29.80px;font-weight:400;color:#f8fafc;white-space:nowrap;-webkit-text-stroke:0.7px #f8fafc;letter-spacing:0.114px;">Rutronik</div>
<div id="t66" style="position:absolute;left:1533.00px;top:1227.48px;font-size:29.80px;line-height:29.80px;font-weight:400;color:#f8fafc;white-space:nowrap;-webkit-text-stroke:0.7px #f8fafc;letter-spacing:-0.592px;">SAMSUNG Electro-Mechanics</div>
<svg style="position:absolute;left:1965.4px;top:1227.2px;" width="30" height="30" viewBox="0 0 24 24" fill="none" stroke="#8a94a3" stroke-width="2.4" stroke-linecap="round" stroke-linejoin="round"><path d="m15 18-6-6 6-6"/></svg>
<div id="t67" style="position:absolute;left:2013.50px;top:1230.57px;font-size:24.71px;line-height:24.71px;font-weight:400;color:#94a3b8;white-space:nowrap;letter-spacing:1.020px;">4,000+</div>
<div style="position:absolute;left:2102px;top:1220px;width:158px;height:44px;background:#e2e8f0;border-radius:16px;"></div>
<div id="t68" style="position:absolute;left:2121.30px;top:1230.46px;font-size:25.44px;line-height:25.44px;font-weight:400;color:#0f172a;white-space:nowrap;-webkit-text-stroke:0.7px #0f172a;letter-spacing:-0.488px;">0.002 EUR</div>
<div id="t69" style="position:absolute;left:2276.80px;top:1230.57px;font-size:24.71px;line-height:24.71px;font-weight:400;color:#94a3b8;white-space:nowrap;letter-spacing:1.020px;">4,000+</div>
<div style="position:absolute;left:2365px;top:1220px;width:158px;height:44px;background:#e2e8f0;border-radius:16px;"></div>
<div id="t70" style="position:absolute;left:2384.30px;top:1230.46px;font-size:25.44px;line-height:25.44px;font-weight:400;color:#0f172a;white-space:nowrap;-webkit-text-stroke:0.7px #0f172a;letter-spacing:-0.488px;">0.002 EUR</div>
<svg style="position:absolute;left:2540px;top:1227.2px;" width="30" height="30" viewBox="0 0 24 24" fill="none" stroke="#e2e8f0" stroke-width="2.4" stroke-linecap="round" stroke-linejoin="round"><path d="m9 18 6-6-6-6"/></svg>
<div id="t71" style="position:absolute;left:2593.90px;top:1231.07px;font-size:24.71px;line-height:24.71px;font-weight:400;color:#94a3b8;white-space:nowrap;letter-spacing:0.450px;">1/6</div>
<div style="position:absolute;left:2661px;top:1220px;width:147px;height:44px;background:#e2e8f0;border-radius:16px;"></div>
<div id="t72" style="position:absolute;left:2679.70px;top:1230.72px;font-size:24.42px;line-height:24.42px;font-weight:400;color:#475569;white-space:nowrap;-webkit-text-stroke:0.7px #475569;letter-spacing:0.920px;">Better</div>
<svg style="position:absolute;left:2766.3px;top:1230.6px;" width="23.4" height="23.4" viewBox="0 0 24 24" fill="none" stroke="#475569" stroke-width="2" stroke-linecap="round" stroke-linejoin="round"><circle cx="12" cy="12" r="10"/><path d="M12 16v-4"/><path d="M12 8h.01"/></svg>
<div id="t73" style="position:absolute;left:2842.00px;top:1227.48px;font-size:29.80px;line-height:29.80px;font-weight:400;color:#f8fafc;white-space:nowrap;-webkit-text-stroke:0.7px #f8fafc;letter-spacing:-0.325px;">5,816,000</div>
<div id="t74" style="position:absolute;left:3027.00px;top:1227.48px;font-size:29.80px;line-height:29.80px;font-weight:400;color:#f8fafc;white-space:nowrap;-webkit-text-stroke:0.7px #f8fafc;letter-spacing:0.350px;">4,000</div>
<div id="t75" style="position:absolute;left:3160.00px;top:1227.48px;font-size:29.80px;line-height:29.80px;font-weight:400;color:#f8fafc;white-space:nowrap;-webkit-text-stroke:0.7px #f8fafc;letter-spacing:-0.533px;">3 weeks</div>
<div id="t76" style="position:absolute;left:3361.00px;top:1227.48px;font-size:29.80px;line-height:29.80px;font-weight:400;color:#f8fafc;white-space:nowrap;-webkit-text-stroke:0.7px #f8fafc;letter-spacing:-2.029px;">REEL PAP</div>
<div id="t77" style="position:absolute;left:3565.00px;top:1227.48px;font-size:29.80px;line-height:29.80px;font-weight:400;color:#f8fafc;white-space:nowrap;-webkit-text-stroke:0.7px #f8fafc;">-</div>
<div id="t78" style="position:absolute;left:784.00px;top:1336.62px;font-size:39.24px;line-height:39.24px;font-weight:700;color:#f8fafc;white-space:nowrap;letter-spacing:-2.080px;">Available Offers</div>
<div style="position:absolute;left:784px;top:1408px;width:2904px;height:692px;border:2px solid #2a303c;border-radius:16px;box-sizing:border-box;overflow:hidden"><div style="position:absolute;left:0;top:0;width:100%;height:76px;background:#050a17"></div></div>
<div style="position:absolute;left:786px;top:1486px;width:2900px;height:4px;background:#2a303c;border-radius:0px;"></div>
<div style="position:absolute;left:965px;top:1410px;width:2px;height:688px;background:#2a303c;border-radius:0px;"></div>
<div style="position:absolute;left:1318px;top:1410px;width:2px;height:688px;background:#2a303c;border-radius:0px;"></div>
<div style="position:absolute;left:1708px;top:1410px;width:2px;height:688px;background:#2a303c;border-radius:0px;"></div>
<div style="position:absolute;left:2191px;top:1410px;width:2px;height:688px;background:#2a303c;border-radius:0px;"></div>
<div style="position:absolute;left:3100px;top:1410px;width:2px;height:688px;background:#2a303c;border-radius:0px;"></div>
<div style="position:absolute;left:3283px;top:1410px;width:2px;height:688px;background:#2a303c;border-radius:0px;"></div>
<div style="position:absolute;left:3417px;top:1410px;width:2px;height:688px;background:#2a303c;border-radius:0px;"></div>
<div style="position:absolute;left:3618px;top:1410px;width:2px;height:688px;background:#2a303c;border-radius:0px;"></div>
<div id="t79" style="position:absolute;left:804.20px;top:1433.53px;font-size:29.51px;line-height:29.51px;font-weight:400;color:#f8fafc;white-space:nowrap;-webkit-text-stroke:1.0px #f8fafc;letter-spacing:0.160px;">Action</div>
<div id="t80" style="position:absolute;left:982.20px;top:1433.53px;font-size:29.51px;line-height:29.51px;font-weight:400;color:#f8fafc;white-space:nowrap;-webkit-text-stroke:1.0px #f8fafc;letter-spacing:-0.100px;">MPN</div>
<div id="t81" style="position:absolute;left:1335.60px;top:1433.53px;font-size:29.51px;line-height:29.51px;font-weight:400;color:#f8fafc;white-space:nowrap;-webkit-text-stroke:1.0px #f8fafc;letter-spacing:0.257px;">Supplier</div>
<svg style="position:absolute;left:1453.5px;top:1436px;" width="23.5" height="23.5" viewBox="0 0 24 24" fill="none" stroke="#94a3b8" stroke-width="2.3" stroke-linecap="round" stroke-linejoin="round"><path d="m21 16-4 4-4-4"/><path d="M17 20V4"/><path d="m3 8 4-4 4 4"/><path d="M7 4v16"/></svg>
<div id="t82" style="position:absolute;left:1724.80px;top:1433.53px;font-size:29.51px;line-height:29.51px;font-weight:400;color:#f8fafc;white-space:nowrap;-webkit-text-stroke:1.0px #f8fafc;letter-spacing:0.582px;">Manufacturer</div>
<svg style="position:absolute;left:1912.5px;top:1436px;" width="23.5" height="23.5" viewBox="0 0 24 24" fill="none" stroke="#94a3b8" stroke-width="2.3" stroke-linecap="round" stroke-linejoin="round"><path d="m21 16-4 4-4-4"/><path d="M17 20V4"/><path d="m3 8 4-4 4 4"/><path d="M7 4v16"/></svg>
<div id="t83" style="position:absolute;left:2208.00px;top:1433.53px;font-size:29.51px;line-height:29.51px;font-weight:400;color:#f8fafc;white-space:nowrap;-webkit-text-stroke:1.0px #f8fafc;letter-spacing:-0.109px;">Price Breaks</div>
<svg style="position:absolute;left:2380.5px;top:1436px;" width="23.5" height="23.5" viewBox="0 0 24 24" fill="none" stroke="#94a3b8" stroke-width="2.3" stroke-linecap="round" stroke-linejoin="round"><path d="m21 16-4 4-4-4"/><path d="M17 20V4"/><path d="m3 8 4-4 4 4"/><path d="M7 4v16"/></svg>
<div id="t84" style="position:absolute;left:3119.00px;top:1433.53px;font-size:29.51px;line-height:29.51px;font-weight:400;color:#f8fafc;white-space:nowrap;-webkit-text-stroke:1.0px #f8fafc;letter-spacing:-0.275px;">Available</div>
<svg style="position:absolute;left:3244.5px;top:1436px;" width="23.5" height="23.5" viewBox="0 0 24 24" fill="none" stroke="#94a3b8" stroke-width="2.3" stroke-linecap="round" stroke-linejoin="round"><path d="m21 16-4 4-4-4"/><path d="M17 20V4"/><path d="m3 8 4-4 4 4"/><path d="M7 4v16"/></svg>
<div id="t85" style="position:absolute;left:3300.80px;top:1433.53px;font-size:29.51px;line-height:29.51px;font-weight:400;color:#f8fafc;white-space:nowrap;-webkit-text-stroke:1.0px #f8fafc;letter-spacing:-1.000px;">MOQ</div>
<svg style="position:absolute;left:3377.3px;top:1436px;" width="23.5" height="23.5" viewBox="0 0 24 24" fill="none" stroke="#94a3b8" stroke-width="2.3" stroke-linecap="round" stroke-linejoin="round"><path d="m21 16-4 4-4-4"/><path d="M17 20V4"/><path d="m3 8 4-4 4 4"/><path d="M7 4v16"/></svg>
<div id="t86" style="position:absolute;left:3434.60px;top:1433.53px;font-size:29.51px;line-height:29.51px;font-weight:400;color:#f8fafc;white-space:nowrap;-webkit-text-stroke:1.0px #f8fafc;letter-spacing:-0.025px;">Lead Time</div>
<svg style="position:absolute;left:3579.5px;top:1436px;" width="23.5" height="23.5" viewBox="0 0 24 24" fill="none" stroke="#94a3b8" stroke-width="2.3" stroke-linecap="round" stroke-linejoin="round"><path d="m21 16-4 4-4-4"/><path d="M17 20V4"/><path d="m3 8 4-4 4 4"/><path d="M7 4v16"/></svg>
<div id="t87" style="position:absolute;left:3637.00px;top:1433.53px;font-size:29.51px;line-height:29.51px;font-weight:400;color:#f8fafc;white-space:nowrap;-webkit-text-stroke:1.0px #f8fafc;width:47px;overflow:hidden;">Packaging</div>
<div style="position:absolute;left:802px;top:1506px;width:147px;height:72px;background:#3b839d;border-radius:16px;"></div>
<div id="t88" style="position:absolute;left:834.30px;top:1527.28px;font-size:29.80px;line-height:29.80px;font-weight:400;color:#f8fafc;white-space:nowrap;-webkit-text-stroke:1.0px #f8fafc;letter-spacing:-0.240px;">Select</div>
<div id="t89" style="position:absolute;left:983.20px;top:1527.28px;font-size:29.80px;line-height:29.80px;font-weight:400;color:#f8fafc;white-space:nowrap;-webkit-text-stroke:0.7px #f8fafc;letter-spacing:-0.850px;">CL10B104KA8NNNC</div>
<svg style="position:absolute;left:1270.1px;top:1525.8px;" width="32" height="32" viewBox="0 0 24 24" fill="none" stroke="#94a3b8" stroke-width="2" stroke-linecap="round" stroke-linejoin="round"><path d="M15 3h6v6"/><path d="M10 14 21 3"/><path d="M18 13v6a2 2 0 0 1-2 2H5a2 2 0 0 1-2-2V8a2 2 0 0 1 2-2h6"/></svg>
<div id="t90" style="position:absolute;left:1334.60px;top:1527.28px;font-size:29.80px;line-height:29.80px;font-weight:400;color:#f8fafc;white-space:nowrap;-webkit-text-stroke:0.7px #f8fafc;letter-spacing:0.094px;">Future Electronics</div>
<div id="t91" style="position:absolute;left:1725.80px;top:1527.28px;font-size:29.80px;line-height:29.80px;font-weight:400;color:#f8fafc;white-space:nowrap;-webkit-text-stroke:0.7px #f8fafc;letter-spacing:-0.150px;">&quot;Samsung Electro-Mechanics&quot;</div>
<svg style="position:absolute;left:2218px;top:1527.5px;" width="30" height="30" viewBox="0 0 24 24" fill="none" stroke="#8a94a3" stroke-width="2.4" stroke-linecap="round" stroke-linejoin="round"><path d="m15 18-6-6 6-6"/></svg>
<div id="t92" style="position:absolute;left:2265.00px;top:1530.77px;font-size:24.71px;line-height:24.71px;font-weight:400;color:#94a3b8;white-space:nowrap;letter-spacing:1.160px;">4,000+</div>
<div style="position:absolute;left:2354px;top:1520px;width:161px;height:44px;background:#e2e8f0;border-radius:16px;"></div>
<div id="t93" style="position:absolute;left:2372.60px;top:1530.16px;font-size:25.44px;line-height:25.44px;font-weight:400;color:#0f172a;white-space:nowrap;-webkit-text-stroke:0.7px #0f172a;letter-spacing:-0.275px;">0.027 NOK</div>
<div id="t94" style="position:absolute;left:2529.00px;top:1530.77px;font-size:24.71px;line-height:24.71px;font-weight:400;color:#94a3b8;white-space:nowrap;letter-spacing:0.800px;">16,000+</div>
<div style="position:absolute;left:2631px;top:1520px;width:162px;height:44px;background:#1a2332;border-radius:16px;"></div>
<div id="t95" style="position:absolute;left:2649.80px;top:1530.16px;font-size:25.44px;line-height:25.44px;font-weight:400;color:#f8fafc;white-space:nowrap;-webkit-text-stroke:0.7px #f8fafc;letter-spacing:-0.075px;">0.026 NOK</div>
<svg style="position:absolute;left:2808.5px;top:1527.5px;" width="30" height="30" viewBox="0 0 24 24" fill="none" stroke="#e2e8f0" stroke-width="2.4" stroke-linecap="round" stroke-linejoin="round"><path d="m9 18 6-6-6-6"/></svg>
<div id="t96" style="position:absolute;left:2864.60px;top:1530.77px;font-size:24.71px;line-height:24.71px;font-weight:400;color:#94a3b8;white-space:nowrap;letter-spacing:-0.100px;">1/5</div>
<div style="position:absolute;left:2931px;top:1520px;width:153px;height:44px;background:#ad4550;border-radius:16px;"></div>
<div id="t97" style="position:absolute;left:2949.00px;top:1530.77px;font-size:24.71px;line-height:24.71px;font-weight:400;color:#a3161b;white-space:nowrap;-webkit-text-stroke:0.7px #a3161b;letter-spacing:0.700px;">Higher</div>
<svg style="position:absolute;left:3042px;top:1530.1px;" width="23.4" height="23.4" viewBox="0 0 24 24" fill="none" stroke="#a3161b" stroke-width="2" stroke-linecap="round" stroke-linejoin="round"><circle cx="12" cy="12" r="10"/><path d="M12 16v-4"/><path d="M12 8h.01"/></svg>
<div id="t98" style="position:absolute;left:3120.00px;top:1528.09px;font-size:29.07px;line-height:29.07px;font-weight:400;color:#f8fafc;white-space:nowrap;-webkit-text-stroke:0.7px #f8fafc;letter-spacing:0.225px;">3,900,000</div>
<div id="t99" style="position:absolute;left:3302.80px;top:1528.29px;font-size:29.07px;line-height:29.07px;font-weight:400;color:#f8fafc;white-space:nowrap;-webkit-text-stroke:0.7px #f8fafc;letter-spacing:0.850px;">4,000</div>
<div id="t100" style="position:absolute;left:3436.60px;top:1528.29px;font-size:29.07px;line-height:29.07px;font-weight:400;color:#f8fafc;white-space:nowrap;-webkit-text-stroke:0.7px #f8fafc;letter-spacing:-0.367px;">3 weeks</div>
<div id="t101" style="position:absolute;left:3638.00px;top:1528.09px;font-size:29.07px;line-height:29.07px;font-weight:400;color:#f8fafc;white-space:nowrap;-webkit-text-stroke:0.7px #f8fafc;">-</div>
<div style="position:absolute;left:802px;top:1610px;width:147px;height:72px;background:#3b839d;border-radius:16px;"></div>
<div id="t102" style="position:absolute;left:834.30px;top:1631.28px;font-size:29.80px;line-height:29.80px;font-weight:400;color:#f8fafc;white-space:nowrap;-webkit-text-stroke:1.0px #f8fafc;letter-spacing:-0.240px;">Select</div>
<div id="t103" style="position:absolute;left:983.20px;top:1631.28px;font-size:29.80px;line-height:29.80px;font-weight:400;color:#f8fafc;white-space:nowrap;-webkit-text-stroke:0.7px #f8fafc;letter-spacing:-0.850px;">CL10B104KA8NNNC</div>
<svg style="position:absolute;left:1270.1px;top:1629.8px;" width="32" height="32" viewBox="0 0 24 24" fill="none" stroke="#94a3b8" stroke-width="2" stroke-linecap="round" stroke-linejoin="round"><path d="M15 3h6v6"/><path d="M10 14 21 3"/><path d="M18 13v6a2 2 0 0 1-2 2H5a2 2 0 0 1-2-2V8a2 2 0 0 1 2-2h6"/></svg>
<div id="t104" style="position:absolute;left:1334.60px;top:1631.28px;font-size:29.80px;line-height:29.80px;font-weight:400;color:#f8fafc;white-space:nowrap;-webkit-text-stroke:0.7px #f8fafc;letter-spacing:0.094px;">Future Electronics</div>
<div id="t105" style="position:absolute;left:1725.80px;top:1631.28px;font-size:29.80px;line-height:29.80px;font-weight:400;color:#f8fafc;white-space:nowrap;-webkit-text-stroke:0.7px #f8fafc;letter-spacing:-0.150px;">&quot;Samsung Electro-Mechanics&quot;</div>
<svg style="position:absolute;left:2218px;top:1631.5px;" width="30" height="30" viewBox="0 0 24 24" fill="none" stroke="#8a94a3" stroke-width="2.4" stroke-linecap="round" stroke-linejoin="round"><path d="m15 18-6-6 6-6"/></svg>
<div id="t106" style="position:absolute;left:2265.00px;top:1634.77px;font-size:24.71px;line-height:24.71px;font-weight:400;color:#94a3b8;white-space:nowrap;letter-spacing:1.160px;">4,000+</div>
<div style="position:absolute;left:2354px;top:1624px;width:161px;height:44px;background:#e2e8f0;border-radius:16px;"></div>
<div id="t107" style="position:absolute;left:2372.60px;top:1634.16px;font-size:25.44px;line-height:25.44px;font-weight:400;color:#0f172a;white-space:nowrap;-webkit-text-stroke:0.7px #0f172a;letter-spacing:-0.275px;">0.027 NOK</div>
<div id="t108" style="position:absolute;left:2529.00px;top:1634.77px;font-size:24.71px;line-height:24.71px;font-weight:400;color:#94a3b8;white-space:nowrap;letter-spacing:0.800px;">16,000+</div>
<div style="position:absolute;left:2631px;top:1624px;width:162px;height:44px;background:#1a2332;border-radius:16px;"></div>
<div id="t109" style="position:absolute;left:2649.80px;top:1634.16px;font-size:25.44px;line-height:25.44px;font-weight:400;color:#f8fafc;white-space:nowrap;-webkit-text-stroke:0.7px #f8fafc;letter-spacing:-0.075px;">0.026 NOK</div>
<svg style="position:absolute;left:2808.5px;top:1631.5px;" width="30" height="30" viewBox="0 0 24 24" fill="none" stroke="#e2e8f0" stroke-width="2.4" stroke-linecap="round" stroke-linejoin="round"><path d="m9 18 6-6-6-6"/></svg>
<div id="t110" style="position:absolute;left:2864.60px;top:1634.77px;font-size:24.71px;line-height:24.71px;font-weight:400;color:#94a3b8;white-space:nowrap;letter-spacing:-0.100px;">1/5</div>
<div style="position:absolute;left:2931px;top:1624px;width:153px;height:44px;background:#ad4550;border-radius:16px;"></div>
<div id="t111" style="position:absolute;left:2949.00px;top:1634.77px;font-size:24.71px;line-height:24.71px;font-weight:400;color:#a3161b;white-space:nowrap;-webkit-text-stroke:0.7px #a3161b;letter-spacing:0.700px;">Higher</div>
<svg style="position:absolute;left:3042px;top:1634.1px;" width="23.4" height="23.4" viewBox="0 0 24 24" fill="none" stroke="#a3161b" stroke-width="2" stroke-linecap="round" stroke-linejoin="round"><circle cx="12" cy="12" r="10"/><path d="M12 16v-4"/><path d="M12 8h.01"/></svg>
<div id="t112" style="position:absolute;left:3120.00px;top:1632.09px;font-size:29.07px;line-height:29.07px;font-weight:400;color:#f8fafc;white-space:nowrap;-webkit-text-stroke:0.7px #f8fafc;letter-spacing:0.225px;">3,900,000</div>
<div id="t113" style="position:absolute;left:3302.80px;top:1632.29px;font-size:29.07px;line-height:29.07px;font-weight:400;color:#f8fafc;white-space:nowrap;-webkit-text-stroke:0.7px #f8fafc;letter-spacing:0.850px;">4,000</div>
<div id="t114" style="position:absolute;left:3436.60px;top:1632.29px;font-size:29.07px;line-height:29.07px;font-weight:400;color:#f8fafc;white-space:nowrap;-webkit-text-stroke:0.7px #f8fafc;letter-spacing:-0.367px;">3 weeks</div>
<div id="t115" style="position:absolute;left:3638.00px;top:1632.09px;font-size:29.07px;line-height:29.07px;font-weight:400;color:#f8fafc;white-space:nowrap;-webkit-text-stroke:0.7px #f8fafc;">-</div>
<div style="position:absolute;left:802px;top:1714px;width:147px;height:72px;background:#3b839d;border-radius:16px;"></div>
<div id="t116" style="position:absolute;left:834.30px;top:1735.28px;font-size:29.80px;line-height:29.80px;font-weight:400;color:#f8fafc;white-space:nowrap;-webkit-text-stroke:1.0px #f8fafc;letter-spacing:-0.240px;">Select</div>
<div id="t117" style="position:absolute;left:983.20px;top:1735.28px;font-size:29.80px;line-height:29.80px;font-weight:400;color:#f8fafc;white-space:nowrap;-webkit-text-stroke:0.7px #f8fafc;letter-spacing:-0.850px;">CL10B104KA8NNNC</div>
<svg style="position:absolute;left:1270.1px;top:1733.8px;" width="32" height="32" viewBox="0 0 24 24" fill="none" stroke="#94a3b8" stroke-width="2" stroke-linecap="round" stroke-linejoin="round"><path d="M15 3h6v6"/><path d="M10 14 21 3"/><path d="M18 13v6a2 2 0 0 1-2 2H5a2 2 0 0 1-2-2V8a2 2 0 0 1 2-2h6"/></svg>
<div id="t118" style="position:absolute;left:1334.60px;top:1735.28px;font-size:29.80px;line-height:29.80px;font-weight:400;color:#f8fafc;white-space:nowrap;-webkit-text-stroke:0.7px #f8fafc;letter-spacing:0.094px;">Future Electronics</div>
<div id="t119" style="position:absolute;left:1725.80px;top:1735.28px;font-size:29.80px;line-height:29.80px;font-weight:400;color:#f8fafc;white-space:nowrap;-webkit-text-stroke:0.7px #f8fafc;letter-spacing:-0.150px;">&quot;Samsung Electro-Mechanics&quot;</div>
<svg style="position:absolute;left:2218px;top:1735.5px;" width="30" height="30" viewBox="0 0 24 24" fill="none" stroke="#8a94a3" stroke-width="2.4" stroke-linecap="round" stroke-linejoin="round"><path d="m15 18-6-6 6-6"/></svg>
<div id="t120" style="position:absolute;left:2265.00px;top:1738.77px;font-size:24.71px;line-height:24.71px;font-weight:400;color:#94a3b8;white-space:nowrap;letter-spacing:1.160px;">4,000+</div>
<div style="position:absolute;left:2354px;top:1728px;width:161px;height:44px;background:#e2e8f0;border-radius:16px;"></div>
<div id="t121" style="position:absolute;left:2372.60px;top:1738.16px;font-size:25.44px;line-height:25.44px;font-weight:400;color:#0f172a;white-space:nowrap;-webkit-text-stroke:0.7px #0f172a;letter-spacing:-0.275px;">0.027 NOK</div>
<div id="t122" style="position:absolute;left:2529.00px;top:1738.77px;font-size:24.71px;line-height:24.71px;font-weight:400;color:#94a3b8;white-space:nowrap;letter-spacing:0.800px;">16,000+</div>
<div style="position:absolute;left:2631px;top:1728px;width:162px;height:44px;background:#1a2332;border-radius:16px;"></div>
<div id="t123" style="position:absolute;left:2649.80px;top:1738.16px;font-size:25.44px;line-height:25.44px;font-weight:400;color:#f8fafc;white-space:nowrap;-webkit-text-stroke:0.7px #f8fafc;letter-spacing:-0.075px;">0.026 NOK</div>
<svg style="position:absolute;left:2808.5px;top:1735.5px;" width="30" height="30" viewBox="0 0 24 24" fill="none" stroke="#e2e8f0" stroke-width="2.4" stroke-linecap="round" stroke-linejoin="round"><path d="m9 18 6-6-6-6"/></svg>
<div id="t124" style="position:absolute;left:2864.60px;top:1738.77px;font-size:24.71px;line-height:24.71px;font-weight:400;color:#94a3b8;white-space:nowrap;letter-spacing:-0.100px;">1/5</div>
<div style="position:absolute;left:2931px;top:1728px;width:153px;height:44px;background:#ad4550;border-radius:16px;"></div>
<div id="t125" style="position:absolute;left:2949.00px;top:1738.77px;font-size:24.71px;line-height:24.71px;font-weight:400;color:#a3161b;white-space:nowrap;-webkit-text-stroke:0.7px #a3161b;letter-spacing:0.700px;">Higher</div>
<svg style="position:absolute;left:3042px;top:1738.1px;" width="23.4" height="23.4" viewBox="0 0 24 24" fill="none" stroke="#a3161b" stroke-width="2" stroke-linecap="round" stroke-linejoin="round"><circle cx="12" cy="12" r="10"/><path d="M12 16v-4"/><path d="M12 8h.01"/></svg>
<div id="t126" style="position:absolute;left:3120.00px;top:1736.09px;font-size:29.07px;line-height:29.07px;font-weight:400;color:#f8fafc;white-space:nowrap;-webkit-text-stroke:0.7px #f8fafc;letter-spacing:0.225px;">3,900,000</div>
<div id="t127" style="position:absolute;left:3302.80px;top:1736.29px;font-size:29.07px;line-height:29.07px;font-weight:400;color:#f8fafc;white-space:nowrap;-webkit-text-stroke:0.7px #f8fafc;letter-spacing:0.850px;">4,000</div>
<div id="t128" style="position:absolute;left:3436.60px;top:1736.29px;font-size:29.07px;line-height:29.07px;font-weight:400;color:#f8fafc;white-space:nowrap;-webkit-text-stroke:0.7px #f8fafc;letter-spacing:-0.367px;">3 weeks</div>
<div id="t129" style="position:absolute;left:3638.00px;top:1736.09px;font-size:29.07px;line-height:29.07px;font-weight:400;color:#f8fafc;white-space:nowrap;-webkit-text-stroke:0.7px #f8fafc;">-</div>
<div style="position:absolute;left:802px;top:1818px;width:147px;height:72px;background:#3b839d;border-radius:16px;"></div>
<div id="t130" style="position:absolute;left:834.30px;top:1839.28px;font-size:29.80px;line-height:29.80px;font-weight:400;color:#f8fafc;white-space:nowrap;-webkit-text-stroke:1.0px #f8fafc;letter-spacing:-0.240px;">Select</div>
<div id="t131" style="position:absolute;left:983.20px;top:1839.28px;font-size:29.80px;line-height:29.80px;font-weight:400;color:#f8fafc;white-space:nowrap;-webkit-text-stroke:0.7px #f8fafc;letter-spacing:-0.850px;">CL10B104KA8NNNC</div>
<svg style="position:absolute;left:1270.1px;top:1837.8px;" width="32" height="32" viewBox="0 0 24 24" fill="none" stroke="#94a3b8" stroke-width="2" stroke-linecap="round" stroke-linejoin="round"><path d="M15 3h6v6"/><path d="M10 14 21 3"/><path d="M18 13v6a2 2 0 0 1-2 2H5a2 2 0 0 1-2-2V8a2 2 0 0 1 2-2h6"/></svg>
<div id="t132" style="position:absolute;left:1334.60px;top:1839.28px;font-size:29.80px;line-height:29.80px;font-weight:400;color:#f8fafc;white-space:nowrap;-webkit-text-stroke:0.7px #f8fafc;letter-spacing:0.094px;">Future Electronics</div>
<div id="t133" style="position:absolute;left:1725.80px;top:1839.28px;font-size:29.80px;line-height:29.80px;font-weight:400;color:#f8fafc;white-space:nowrap;-webkit-text-stroke:0.7px #f8fafc;letter-spacing:-0.150px;">&quot;Samsung Electro-Mechanics&quot;</div>
<svg style="position:absolute;left:2218px;top:1839.5px;" width="30" height="30" viewBox="0 0 24 24" fill="none" stroke="#8a94a3" stroke-width="2.4" stroke-linecap="round" stroke-linejoin="round"><path d="m15 18-6-6 6-6"/></svg>
<div id="t134" style="position:absolute;left:2265.00px;top:1842.77px;font-size:24.71px;line-height:24.71px;font-weight:400;color:#94a3b8;white-space:nowrap;letter-spacing:1.160px;">4,000+</div>
<div style="position:absolute;left:2354px;top:1832px;width:161px;height:44px;background:#e2e8f0;border-radius:16px;"></div>
<div id="t135" style="position:absolute;left:2372.60px;top:1842.16px;font-size:25.44px;line-height:25.44px;font-weight:400;color:#0f172a;white-space:nowrap;-webkit-text-stroke:0.7px #0f172a;letter-spacing:-0.275px;">0.027 NOK</div>
<div id="t136" style="position:absolute;left:2529.00px;top:1842.77px;font-size:24.71px;line-height:24.71px;font-weight:400;color:#94a3b8;white-space:nowrap;letter-spacing:0.800px;">16,000+</div>
<div style="position:absolute;left:2631px;top:1832px;width:162px;height:44px;background:#1a2332;border-radius:16px;"></div>
<div id="t137" style="position:absolute;left:2649.80px;top:1842.16px;font-size:25.44px;line-height:25.44px;font-weight:400;color:#f8fafc;white-space:nowrap;-webkit-text-stroke:0.7px #f8fafc;letter-spacing:-0.075px;">0.026 NOK</div>
<svg style="position:absolute;left:2808.5px;top:1839.5px;" width="30" height="30" viewBox="0 0 24 24" fill="none" stroke="#e2e8f0" stroke-width="2.4" stroke-linecap="round" stroke-linejoin="round"><path d="m9 18 6-6-6-6"/></svg>
<div id="t138" style="position:absolute;left:2864.60px;top:1842.77px;font-size:24.71px;line-height:24.71px;font-weight:400;color:#94a3b8;white-space:nowrap;letter-spacing:-0.100px;">1/5</div>
<div style="position:absolute;left:2931px;top:1832px;width:153px;height:44px;background:#ad4550;border-radius:16px;"></div>
<div id="t139" style="position:absolute;left:2949.00px;top:1842.77px;font-size:24.71px;line-height:24.71px;font-weight:400;color:#a3161b;white-space:nowrap;-webkit-text-stroke:0.7px #a3161b;letter-spacing:0.700px;">Higher</div>
<svg style="position:absolute;left:3042px;top:1842.1px;" width="23.4" height="23.4" viewBox="0 0 24 24" fill="none" stroke="#a3161b" stroke-width="2" stroke-linecap="round" stroke-linejoin="round"><circle cx="12" cy="12" r="10"/><path d="M12 16v-4"/><path d="M12 8h.01"/></svg>
<div id="t140" style="position:absolute;left:3120.00px;top:1840.09px;font-size:29.07px;line-height:29.07px;font-weight:400;color:#f8fafc;white-space:nowrap;-webkit-text-stroke:0.7px #f8fafc;letter-spacing:0.225px;">3,900,000</div>
<div id="t141" style="position:absolute;left:3302.80px;top:1840.29px;font-size:29.07px;line-height:29.07px;font-weight:400;color:#f8fafc;white-space:nowrap;-webkit-text-stroke:0.7px #f8fafc;letter-spacing:0.850px;">4,000</div>
<div id="t142" style="position:absolute;left:3436.60px;top:1840.29px;font-size:29.07px;line-height:29.07px;font-weight:400;color:#f8fafc;white-space:nowrap;-webkit-text-stroke:0.7px #f8fafc;letter-spacing:-0.367px;">3 weeks</div>
<div id="t143" style="position:absolute;left:3638.00px;top:1840.09px;font-size:29.07px;line-height:29.07px;font-weight:400;color:#f8fafc;white-space:nowrap;-webkit-text-stroke:0.7px #f8fafc;">-</div>
<div style="position:absolute;left:802px;top:1922px;width:147px;height:72px;background:#3b839d;border-radius:16px;"></div>
<div id="t144" style="position:absolute;left:834.30px;top:1943.28px;font-size:29.80px;line-height:29.80px;font-weight:400;color:#f8fafc;white-space:nowrap;-webkit-text-stroke:1.0px #f8fafc;letter-spacing:-0.240px;">Select</div>
<div id="t145" style="position:absolute;left:983.20px;top:1943.28px;font-size:29.80px;line-height:29.80px;font-weight:400;color:#f8fafc;white-space:nowrap;-webkit-text-stroke:0.7px #f8fafc;letter-spacing:-0.850px;">CL10B104KA8NNNC</div>
<svg style="position:absolute;left:1270.1px;top:1941.8px;" width="32" height="32" viewBox="0 0 24 24" fill="none" stroke="#94a3b8" stroke-width="2" stroke-linecap="round" stroke-linejoin="round"><path d="M15 3h6v6"/><path d="M10 14 21 3"/><path d="M18 13v6a2 2 0 0 1-2 2H5a2 2 0 0 1-2-2V8a2 2 0 0 1 2-2h6"/></svg>
<div id="t146" style="position:absolute;left:1334.60px;top:1943.28px;font-size:29.80px;line-height:29.80px;font-weight:400;color:#f8fafc;white-space:nowrap;-webkit-text-stroke:0.7px #f8fafc;letter-spacing:0.094px;">Future Electronics</div>
<div id="t147" style="position:absolute;left:1725.80px;top:1943.28px;font-size:29.80px;line-height:29.80px;font-weight:400;color:#f8fafc;white-space:nowrap;-webkit-text-stroke:0.7px #f8fafc;letter-spacing:-0.150px;">&quot;Samsung Electro-Mechanics&quot;</div>
<svg style="position:absolute;left:2218px;top:1943.5px;" width="30" height="30" viewBox="0 0 24 24" fill="none" stroke="#8a94a3" stroke-width="2.4" stroke-linecap="round" stroke-linejoin="round"><path d="m15 18-6-6 6-6"/></svg>
<div id="t148" style="position:absolute;left:2265.00px;top:1946.77px;font-size:24.71px;line-height:24.71px;font-weight:400;color:#94a3b8;white-space:nowrap;letter-spacing:1.160px;">4,000+</div>
<div style="position:absolute;left:2354px;top:1936px;width:161px;height:44px;background:#e2e8f0;border-radius:16px;"></div>
<div id="t149" style="position:absolute;left:2372.60px;top:1946.16px;font-size:25.44px;line-height:25.44px;font-weight:400;color:#0f172a;white-space:nowrap;-webkit-text-stroke:0.7px #0f172a;letter-spacing:-0.275px;">0.027 NOK</div>
<div id="t150" style="position:absolute;left:2529.00px;top:1946.77px;font-size:24.71px;line-height:24.71px;font-weight:400;color:#94a3b8;white-space:nowrap;letter-spacing:0.800px;">16,000+</div>
<div style="position:absolute;left:2631px;top:1936px;width:162px;height:44px;background:#1a2332;border-radius:16px;"></div>
<div id="t151" style="position:absolute;left:2649.80px;top:1946.16px;font-size:25.44px;line-height:25.44px;font-weight:400;color:#f8fafc;white-space:nowrap;-webkit-text-stroke:0.7px #f8fafc;letter-spacing:-0.075px;">0.026 NOK</div>
<svg style="position:absolute;left:2808.5px;top:1943.5px;" width="30" height="30" viewBox="0 0 24 24" fill="none" stroke="#e2e8f0" stroke-width="2.4" stroke-linecap="round" stroke-linejoin="round"><path d="m9 18 6-6-6-6"/></svg>
<div id="t152" style="position:absolute;left:2864.60px;top:1946.77px;font-size:24.71px;line-height:24.71px;font-weight:400;color:#94a3b8;white-space:nowrap;letter-spacing:-0.100px;">1/5</div>
<div style="position:absolute;left:2931px;top:1936px;width:153px;height:44px;background:#ad4550;border-radius:16px;"></div>
<div id="t153" style="position:absolute;left:2949.00px;top:1946.77px;font-size:24.71px;line-height:24.71px;font-weight:400;color:#a3161b;white-space:nowrap;-webkit-text-stroke:0.7px #a3161b;letter-spacing:0.700px;">Higher</div>
<svg style="position:absolute;left:3042px;top:1946.1px;" width="23.4" height="23.4" viewBox="0 0 24 24" fill="none" stroke="#a3161b" stroke-width="2" stroke-linecap="round" stroke-linejoin="round"><circle cx="12" cy="12" r="10"/><path d="M12 16v-4"/><path d="M12 8h.01"/></svg>
<div id="t154" style="position:absolute;left:3120.00px;top:1944.09px;font-size:29.07px;line-height:29.07px;font-weight:400;color:#f8fafc;white-space:nowrap;-webkit-text-stroke:0.7px #f8fafc;letter-spacing:0.225px;">3,900,000</div>
<div id="t155" style="position:absolute;left:3302.80px;top:1944.29px;font-size:29.07px;line-height:29.07px;font-weight:400;color:#f8fafc;white-space:nowrap;-webkit-text-stroke:0.7px #f8fafc;letter-spacing:0.850px;">4,000</div>
<div id="t156" style="position:absolute;left:3436.60px;top:1944.29px;font-size:29.07px;line-height:29.07px;font-weight:400;color:#f8fafc;white-space:nowrap;-webkit-text-stroke:0.7px #f8fafc;letter-spacing:-0.367px;">3 weeks</div>
<div id="t157" style="position:absolute;left:3638.00px;top:1944.09px;font-size:29.07px;line-height:29.07px;font-weight:400;color:#f8fafc;white-space:nowrap;-webkit-text-stroke:0.7px #f8fafc;">-</div>
</body></html>
